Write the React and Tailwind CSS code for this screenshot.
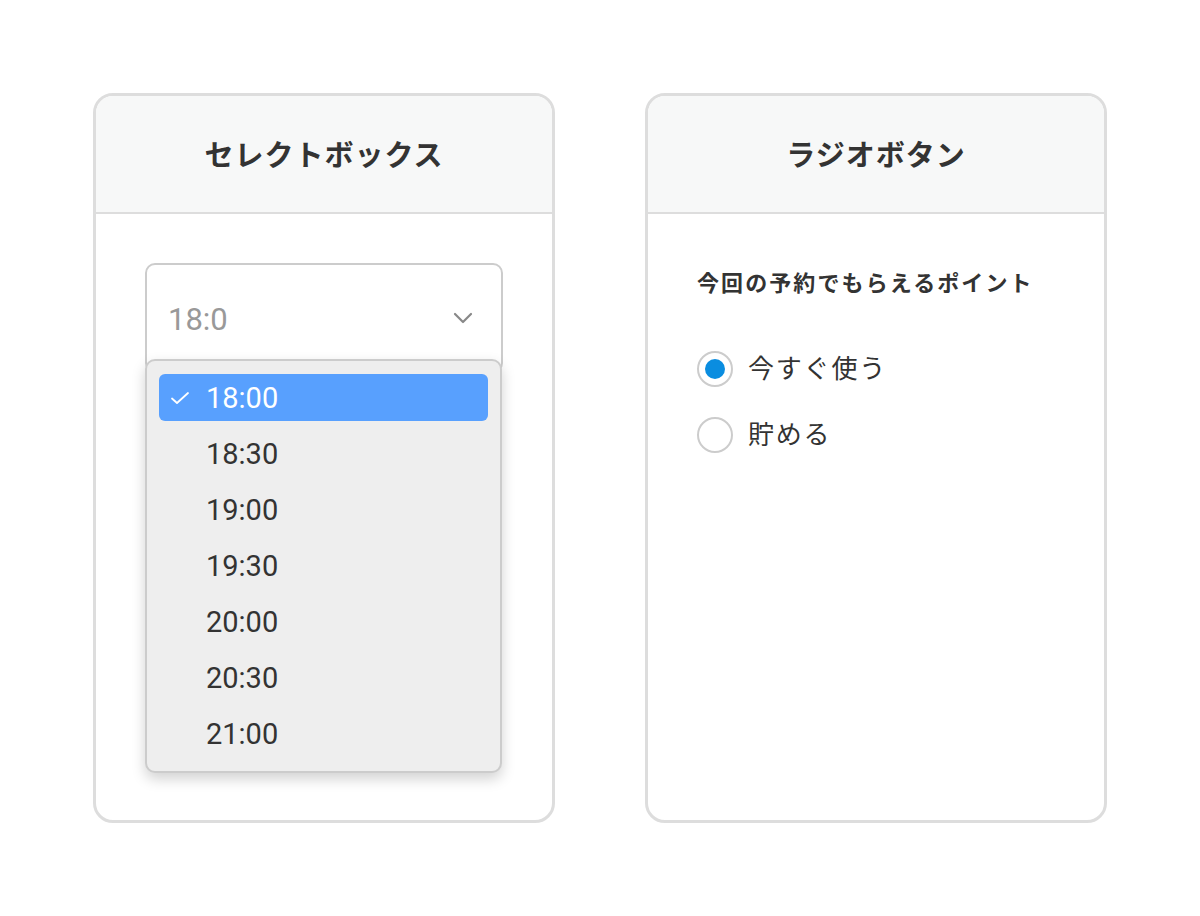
import React from "react";

const font = { fontFamily: "Roboto, 'Noto Sans CJK JP', sans-serif" };

const times = ["18:00", "18:30", "19:00", "19:30", "20:00", "20:30", "21:00"];

function Card({ title, children }) {
    return (
        <div className="w-[462px] h-[730px] border-[3px] border-[#dddddd] rounded-[20px] overflow-hidden bg-white flex flex-col">
            <div className="h-[118px] shrink-0 bg-[#f7f8f8] border-b-2 border-[#dddddd] flex items-center justify-center pt-[5px]">
                <h2 className="text-[29px] font-bold tracking-[1px] text-[#333333] leading-none">{title}</h2>
            </div>
            <div className="flex-1 relative">{children}</div>
        </div>
    );
}

function CheckIcon() {
    return (
        <svg width="20" height="14" viewBox="0 0 20 14" fill="none">
            <path d="M2 7.5 L7 12 L18 2" stroke="white" strokeWidth="1.8" strokeLinecap="round" strokeLinejoin="round" />
        </svg>
    );
}

function SelectBox() {
    return (
        <div className="pt-[49px] px-[49px]">
            <div className="relative w-[358px]">
                <div className="h-[110px] border-2 border-[#cccccc] rounded-[10px] flex items-center justify-between pl-[21px] pr-[28px]">
                    <span className="text-[31px] text-[#999999] leading-none mt-[3px]">18:0</span>
                    <svg width="20" height="12" viewBox="0 0 20 12" fill="none">
                        <path d="M2 2 L10 10 L18 2" stroke="#888888" strokeWidth="2.2" strokeLinecap="round" strokeLinejoin="round" />
                    </svg>
                </div>
                <div className="absolute left-0 top-[96px] w-[357px] bg-[#eeeeee] border-2 border-[#cccccc] rounded-[10px] shadow-[0_6px_14px_rgba(0,0,0,0.18)] pt-[13px] pb-[14px] px-[12px] flex flex-col gap-[9px]">
                    {times.map((t, i) => (
                        <div
                            key={t}
                            className={`h-[47px] rounded-[6px] flex items-center ${i === 0 ? "bg-[#58a0fe] text-white" : "text-[#333333]"}`}
                        >
                            <span className="w-[47px] pl-[11px] flex items-center">{i === 0 && <CheckIcon />}</span>
                            <span className="text-[29px] leading-none mt-[2px]">{t}</span>
                        </div>
                    ))}
                </div>
            </div>
        </div>
    );
}

function Radio({ checked, label }) {
    return (
        <label className="flex items-center h-[66px]">
            <span className="w-[36px] h-[36px] rounded-full border-2 border-[#cccccc] flex items-center justify-center bg-white">
                {checked && <span className="w-[20px] h-[20px] rounded-full bg-[#0a8de0]" />}
            </span>
            <span className="ml-[15px] text-[26px] tracking-[1.8px] text-[#333333] leading-none">{label}</span>
        </label>
    );
}

function RadioGroup() {
    return (
        <div className="pt-[59px] px-[49px]">
            <p className="text-[22px] font-bold tracking-[0.095em] text-[#333333] leading-none">今回の予約でもらえるポイント</p>
            <div className="mt-[41px] flex flex-col">
                <Radio checked label="今すぐ使う" />
                <Radio label="貯める" />
            </div>
        </div>
    );
}

export default function App() {
    return (
        <div className="w-[1200px] h-[916px] bg-white flex justify-center gap-[90px] pt-[93px]" style={font}>
            <Card title="セレクトボックス">
                <SelectBox />
            </Card>
            <Card title="ラジオボタン">
                <RadioGroup />
            </Card>
        </div>
    );
}
